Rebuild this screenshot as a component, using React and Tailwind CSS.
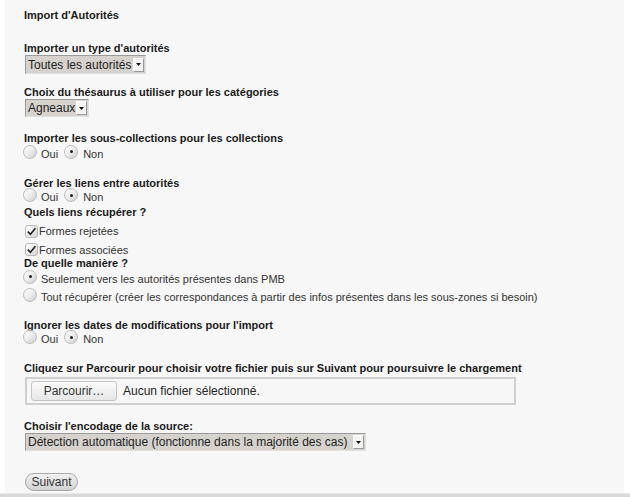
import React from 'react';

const Radio = ({ checked }) => (
  <span className="relative inline-block w-[14px] h-[14px] rounded-full border border-[#bcbcbc] bg-linear-to-br from-[#ffffff] via-[#ececec] to-[#cdcdcd] shrink-0">
    {checked && (
      <span className="absolute left-[4.5px] top-[4.5px] w-[3px] h-[3px] rounded-full bg-[#222]" />
    )}
  </span>
);

const Checkbox = () => (
  <span className="inline-flex items-center justify-center w-[13px] h-[13px] rounded-[3px] border border-[#b8b8b8] bg-linear-to-br from-[#ffffff] to-[#d6d6d6] shrink-0">
    <svg width="11" height="11" viewBox="0 0 11 11">
      <path d="M1.8 5.6 L4.4 8.2 L9.4 2.2" fill="none" stroke="#222" strokeWidth="1.6" />
    </svg>
  </span>
);

const Select = ({ label, width }) => (
  <div
    className={`flex items-center h-full border border-[#9a9a9a] border-r-[#e0e0e0] border-b-[#e0e0e0] bg-[#d6d3ce] pl-[2px] pr-[1px] ${width}`}
  >
    <span className="flex-1 text-[12px] leading-none text-[#222] whitespace-nowrap">{label}</span>
    <span className="flex items-center justify-center w-[11px] h-[14px] bg-[#f4f4f4] border border-[#9a9a9a] border-l-[#ffffff] border-t-[#ffffff]">
      <svg width="5" height="3" viewBox="0 0 5 3">
        <path d="M0 0 H5 L2.5 3 Z" fill="#111" />
      </svg>
    </span>
  </div>
);

const Label = ({ children, className = '' }) => (
  <div className={`h-[14px] leading-[14px] text-[11px] font-bold text-[#1a1a1a] whitespace-nowrap ${className}`}>
    {children}
  </div>
);

const OuiNon = ({ className = '' }) => (
  <div className={`flex items-center text-[11px] text-[#333] ${className}`}>
    <span className="ml-[-1px]"><Radio /></span>
    <span className="ml-[4px]">Oui</span>
    <span className="ml-[6px]"><Radio checked /></span>
    <span className="ml-[5px]">Non</span>
  </div>
);

export default function App() {
  return (
    <div className="w-[630px] h-[497px] bg-white overflow-hidden" style={{ fontFamily: '"Liberation Sans", Arial, sans-serif' }}>
      <div className="ml-[5px] w-[619px] h-[493px] bg-[#f7f7f7] pl-[19px] pt-[8px]">
        <Label>Import d'Autorités</Label>

        <Label className="mt-[19px]">Importer un type d'autorités</Label>
        <div className="h-[19px] ml-[1px]">
          <Select label="Toutes les autorités" width="w-[121px]" />
        </div>

        <Label className="mt-[11px]">Choix du thésaurus à utiliser pour les catégories</Label>
        <div className="h-[18px] ml-[1px]">
          <Select label="Agneaux" width="w-[64px]" />
        </div>

        <Label className="mt-[14px]">Importer les sous-collections pour les collections</Label>
        <OuiNon className="h-[16px] mt-[1px]" />

        <Label className="mt-[14px]">Gérer les liens entre autorités</Label>
        <OuiNon className="h-[15px]" />
        <Label>Quels liens récupérer ?</Label>

        <div className="flex items-center h-[13px] mt-[6px] ml-[1px] text-[11px] text-[#333]">
          <Checkbox />
          <span className="ml-[1px]">Formes rejetées</span>
        </div>
        <div className="flex items-center h-[13px] mt-[5px] ml-[1px] text-[11px] text-[#333]">
          <Checkbox />
          <span className="ml-[1px] mt-[2px]">Formes associées</span>
        </div>
        <Label>De quelle manière ?</Label>

        <div className="flex items-center h-[14px] mt-[2px] text-[11px] text-[#333]">
          <span className="ml-[-1px]"><Radio checked /></span>
          <span className="ml-[4px]">Seulement vers les autorités présentes dans PMB</span>
        </div>
        <div className="flex items-center h-[14px] mt-[4px] text-[11px] text-[#333]">
          <span className="ml-[-1px]"><Radio /></span>
          <span className="ml-[4px]">Tout récupérer (créer les correspondances à partir des infos présentes dans les sous-zones si besoin)</span>
        </div>

        <Label className="mt-[14px]">Ignorer les dates de modifications pour l'import</Label>
        <OuiNon className="h-[15px]" />

        <Label className="mt-[14px]">Cliquez sur Parcourir pour choisir votre fichier puis sur Suivant pour poursuivre le chargement</Label>
        <div className="mt-[2px] ml-[1px] w-[491px] h-[28px] border-2 border-[#cfcfcf] bg-[#f7f7f7] flex items-center pl-[4px]">
          <span className="h-[20px] w-[86px] rounded-[3px] border border-[#c4c4c4] bg-linear-to-b from-[#fbfbfb] to-[#e6e6e6] flex items-center justify-center text-[12px] text-[#333]">
            Parcourir…
          </span>
          <span className="ml-[6px] text-[12px] text-[#222]">Aucun fichier sélectionné.</span>
        </div>

        <Label className="mt-[14px]">Choisir l'encodage de la source:</Label>
        <div className="h-[18px] ml-[1px]">
          <Select label="Détection automatique (fonctionne dans la majorité des cas)" width="w-[341px]" />
        </div>

        <div className="mt-[22px] ml-[1px] h-[18px] w-[53px] rounded-[9px] border border-[#a8a8a8] bg-linear-to-b from-[#f2f2f2] to-[#d2d2d2] flex items-center justify-center text-[12px] text-[#333]">
          Suivant
        </div>
      </div>
      <div className="h-[4px] w-full bg-[#d9d9d9] border-t border-[#e8e8e8]" />
    </div>
  );
}
